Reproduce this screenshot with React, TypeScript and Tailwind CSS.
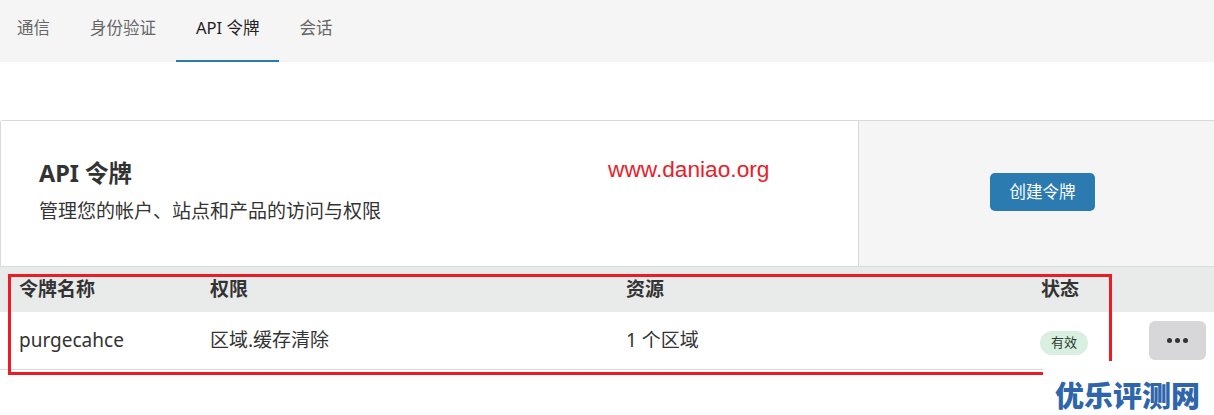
export default function App() {
  const tabs = ['通信', '身份验证', 'API 令牌', '会话'];
  const font = { fontFamily: '"Noto Sans", "Noto Sans CJK SC", sans-serif' };

  return (
    <div className="relative w-[1214px] h-[415px] bg-white overflow-hidden text-[#333]" style={font}>
      {/* tabs */}
      <div className="flex h-[62px] bg-[#f5f5f5] ml-[-3px]">
        {tabs.map((t) => {
          const active = t === 'API 令牌';
          return (
            <div
              key={t}
              className={
                active
                  ? 'flex items-center px-[20px] text-[16.5px] text-[#222] border-b-2 border-[#2c7bb0] pb-[3px]'
                  : 'flex items-center px-[20px] text-[16.5px] text-[#666] border-b-2 border-transparent pb-[3px]'
              }
            >
              {t}
            </div>
          );
        })}
      </div>

      {/* header card */}
      <div className="mt-[58px] flex h-[146px] border-t border-l border-[#d9d9d9] rounded-tl-[3px]">
        <div className="relative flex-1 flex flex-col justify-center pl-[38px] pb-[5px] bg-white">
          <div className="text-[23.5px] font-bold leading-[30px] text-[#333]">API 令牌</div>
          <div className="mt-[10px] text-[19px] leading-[26px] text-[#333]">管理您的帐户、站点和产品的访问与权限</div>
          <div
            className="absolute left-[607px] top-[31px] text-[22.7px] text-[#e8202a]"
            style={{ fontFamily: '"Liberation Sans", sans-serif' }}
          >
            www.daniao.org
          </div>
        </div>
        <div className="w-[356px] flex items-center pl-[131px] pb-[3px] bg-[#f5f5f5] border-l border-[#d9d9d9]">
          <button className="w-[105px] h-[38px] rounded-[5px] bg-[#2c7bb0] text-white text-[16.5px]">创建令牌</button>
        </div>
      </div>

      {/* table */}
      <div className="border-t border-[#d9d9d9]">
        <div className="grid grid-cols-[191px_416px_415px_108px_1fr] h-[45px] items-center bg-[#e9eaea] text-[19px] font-bold text-[#333]">
          <div className="pl-[19px]">令牌名称</div>
          <div className="pl-[19px]">权限</div>
          <div className="pl-[19px]">资源</div>
          <div className="pl-[19px]">状态</div>
          <div />
        </div>
        <div className="grid grid-cols-[191px_416px_415px_108px_1fr] h-[58px] items-center border-b border-[#d9d9d9] text-[19px] text-[#333]">
          <div className="pl-[19px]">purgecahce</div>
          <div className="pl-[19px]">区域.缓存清除</div>
          <div className="pl-[19px]">1 个区域</div>
          <div className="pl-[18px]">
            <span className="inline-flex items-center justify-center w-[48px] h-[24px] rounded-full bg-[#d9efe2] text-[13px] text-[#2e3d31]">有效</span>
          </div>
          <div className="pl-[19px]">
            <button className="flex items-center justify-center gap-[3px] w-[57px] h-[39px] rounded-[6px] bg-[#d7d7d9]">
              <span className="w-[5px] h-[5px] rounded-full bg-[#333]" />
              <span className="w-[5px] h-[5px] rounded-full bg-[#333]" />
              <span className="w-[5px] h-[5px] rounded-full bg-[#333]" />
            </button>
          </div>
        </div>
      </div>

      {/* annotation overlay */}
      <div className="absolute left-[8px] top-[274px] w-[1104px] h-[101px] border-[3px] border-[#ed1c24]" />
      <div className="absolute left-[1043px] top-[361px] w-[171px] h-[54px] bg-white flex items-center pl-[12px] pt-[12px]">
        <span
          className="text-[29px] font-black leading-none tracking-[0px] text-[#2f66ab]"
          style={{ fontFamily: '"Noto Sans CJK SC", sans-serif' }}
        >
          优乐评测网
        </span>
      </div>
    </div>
  );
}
